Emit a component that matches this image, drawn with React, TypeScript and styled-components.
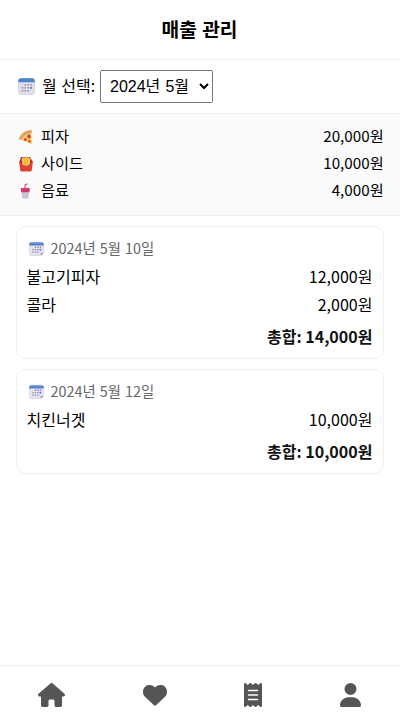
import React from 'react';
import styled, { createGlobalStyle } from 'styled-components';
import { FaHouse, FaHeart, FaReceipt, FaUser } from 'react-icons/fa6';

const GlobalStyle = createGlobalStyle`
  * { box-sizing: border-box; }
  body { margin: 0; background: #fff; color: #000; font-family: 'Noto Sans CJK KR', sans-serif; font-size: 16px; }
`;
const Page = styled.div`
  height: 100vh;
  display: flex;
  flex-direction: column;
`;
const Header = styled.header`
  height: 60px;
  padding: 0 1px 1px 0;
  display: flex;
  align-items: center;
  justify-content: center;
  font-size: 19.2px;
  font-weight: bold;
  word-spacing: 1px;
  border-bottom: 1px solid #eee;
`;
const MonthBar = styled.div`
  height: 54px;
  padding: 0 16px 1px;
  display: flex;
  align-items: center;
  border-bottom: 1px solid #eee;
`;
const MonthLabel = styled.label`
  display: flex;
  align-items: center;
  width: 84px;
  height: 24px;
  margin-top: -2px;
  word-spacing: 1px;
  white-space: nowrap;
`;
const MonthSelect = styled.select`
  width: 113px;
  height: 33px;
  font-size: 16px;
  padding: 5px;
  word-spacing: 0.7px;
  font-family: 'Liberation Sans', 'Noto Sans CJK KR', sans-serif;
`;
const Summary = styled.section`
  height: 102px;
  background: #fafafa;
  border-bottom: 1px solid #eee;
  padding: 8px 16.4px 8px 16px;
  font-size: 15.2px;
`;
const Line = styled.div`
  display: flex;
  justify-content: space-between;
  height: 24px;
  line-height: 24px;
  margin: 0 0.6px 4px -0.5px;
`;
const SummaryLine = styled(Line)`
  height: 27px;
  line-height: 27px;
  margin: 0;
`;
const Label = styled.span`
  display: flex;
  align-items: center;
`;
const List = styled.main`
  flex: 1;
  padding: 10px 16px;
`;
const Card = styled.article`
  border: 1px solid #eee;
  border-radius: 10px;
  padding: 9px 10px 10px;
  margin-bottom: 10px;
`;
const DateText = styled.div`
  display: flex;
  align-items: center;
  height: 22px;
  margin: 0 0 6px -0.5px;
  font-size: 14.4px;
  word-spacing: 0.8px;
  color: #666;
`;
const Total = styled.div`
  height: 23px;
  line-height: 23px;
  font-weight: bold;
  text-align: right;
  margin: 9px 0.6px 0 0;
  color: #111;
`;
const Nav = styled.nav`
  height: 55px;
  padding-top: 4px;
  border-top: 1px solid #eee;
  display: flex;
  justify-content: space-around;
  align-items: center;
  color: #555;
`;
const NavItem = styled.span<{ $width: number }>`
  display: flex;
  width: ${(p) => p.$width}px;
  height: 24px;
  margin-left: -0.5px;
  margin-right: 0.5px;

  svg {
    width: 100%;
    height: 100%;
  }
`;
const Glyph = styled.svg<{ $size: number; $gap: number }>`
  flex: none;
  width: ${(p) => p.$size}px;
  height: ${(p) => p.$size}px;
  margin: 2px ${(p) => p.$gap}px 0 2px;
`;

const CalendarDots = () => (
  <g fill="#8c86a3">
    <path d="M6.600 6.300h1.500v1.500H6.600zM9.400 6.300h1.500v1.500H9.400zM12.200 6.300h1.500v1.500h-1.500zM3.800 9.100h1.500v1.500H3.800zM6.600 9.100h1.500v1.500H6.600zM9.400 9.100h1.500v1.500H9.400zM3.800 11.900h1.500v1.500H3.800zM6.600 11.900h1.500v1.500H6.600zM9.400 11.900h1.500v1.500H9.400z" />
    <path fill="#3f7fd0" d="M12 8.900h1.900v1.900H12z" />
  </g>
);
const Calendar = () => (
  <Glyph $size={17} $gap={7} viewBox="0 0 17 17">
    <rect x=".5" y=".5" width="16" height="16" rx="2.500" fill="#e2dfeb" stroke="#c9c4d6" strokeWidth=".6" />
    <path d="M.3 4.300V3A2.700 2.700 0 0 1 3 .3h11A2.700 2.700 0 0 1 16.700 3v1.300z" fill="#4b82cd" />
    <CalendarDots />
  </Glyph>
);
const SpiralCalendar = () => (
  <Glyph $size={15} $gap={7} viewBox="0 0 17 17">
    <path d="M.5 3h16v10l-3 3.500H2.500a2 2 0 0 1-2-2z" fill="#e7e4f0" stroke="#c5bfd4" strokeWidth=".6" />
    <path d="M.3 5V3.500A2 2 0 0 1 2.300 1.500h12.400a2 2 0 0 1 2 2V5z" fill="#4b82cd" />
    <path d="M3.500.5v2.500M6.800.5v2.500M10.200.5v2.500M13.500.5v2.500" stroke="#b4b9cf" />
    <CalendarDots />
    <path d="M13.300 16.500v-3h3.300z" fill="#978ca9" />
  </Glyph>
);
const Pizza = () => (
  <Glyph $size={16} $gap={7} viewBox="0 0 16 16">
    <path d="M2 10 12.800 3.500 14 15.200z" fill="#fbcf59" />
    <path d="M1 9.500C2.500 5 7.500 1.200 13 1.100c1 0 1.300 2.700.4 3.100C9 5 6 7 3.600 10.300 2.800 11.400.7 10.700 1 9.500z" fill="#dda563" />
    <circle cx="11" cy="7.500" r="1.900" fill="#dd4036" />
    <circle cx="7.300" cy="10.500" r="1.500" fill="#dd4036" />
    <circle cx="11.500" cy="12.300" r="1.300" fill="#dd4036" />
  </Glyph>
);
const Fries = () => (
  <Glyph $size={16} $gap={7} viewBox="0 0 16 16">
    <path d="M3 1h9l2.500 4.500-2 4.500h-9l-2-4.500z" fill="#ac2449" />
    <path d="m3.500 3 2-2 1 1L8 .5 9.500 2l1-1 2 2-1.300 7H4.800z" fill="#fbcd50" />
    <path d="m5.800 2 .8 7M8 1v8m2.200-7-.8 7" stroke="#d99c35" strokeWidth=".6" />
    <path d="M1 5c1 0 2 .7 2.500 2 1 3.500 8 3.500 9 0C13 5.700 14 5 15 5l-1.200 9c-.2 1-.8 1.500-1.800 1.500H4c-1 0-1.600-.5-1.800-1.500z" fill="#dc4038" />
  </Glyph>
);
const Drink = () => (
  <Glyph $size={16} $gap={7} viewBox="0 0 16 16">
    <path d="M7 5V2L9.500.8" fill="none" stroke="#d3426d" strokeWidth="1.100" />
    <path d="M3.300 8h7.900l-.8 6.500c0 .6-.4 1-1 1H5.200c-.6 0-1-.4-1-1z" fill="#cbc3d7" />
    <path d="M3.500 5h7.600c.5 0 .8.4.8 1l-.5 3.300H3.200L2.700 6c0-.6.3-1 .8-1z" fill="#cf3c6c" />
  </Glyph>
);

export default function App() {
  return (
    <Page>
      <GlobalStyle />
      <Header>매출 관리</Header>
      <MonthBar>
        <MonthLabel><Calendar />월 선택:</MonthLabel>
        <MonthSelect><option>2024년 5월</option></MonthSelect>
      </MonthBar>
      <Summary>
        <SummaryLine><Label><Pizza />피자</Label><span>20,000원</span></SummaryLine>
        <SummaryLine><Label><Fries />사이드</Label><span>10,000원</span></SummaryLine>
        <SummaryLine><Label><Drink />음료</Label><span>4,000원</span></SummaryLine>
      </Summary>
      <List>
        <Card>
          <DateText><SpiralCalendar />2024년 5월 10일</DateText>
          <Line><span>불고기피자</span><span>12,000원</span></Line>
          <Line><span>콜라</span><span>2,000원</span></Line>
          <Total>총합: 14,000원</Total>
        </Card>
        <Card>
          <DateText><SpiralCalendar />2024년 5월 12일</DateText>
          <Line><span>치킨너겟</span><span>10,000원</span></Line>
          <Total>총합: 10,000원</Total>
        </Card>
      </List>
      <Nav>
        <NavItem $width={27}><FaHouse /></NavItem>
        <NavItem $width={24}><FaHeart /></NavItem>
        <NavItem $width={18}><FaReceipt /></NavItem>
        <NavItem $width={21}><FaUser /></NavItem>
      </Nav>
    </Page>
  );
}
